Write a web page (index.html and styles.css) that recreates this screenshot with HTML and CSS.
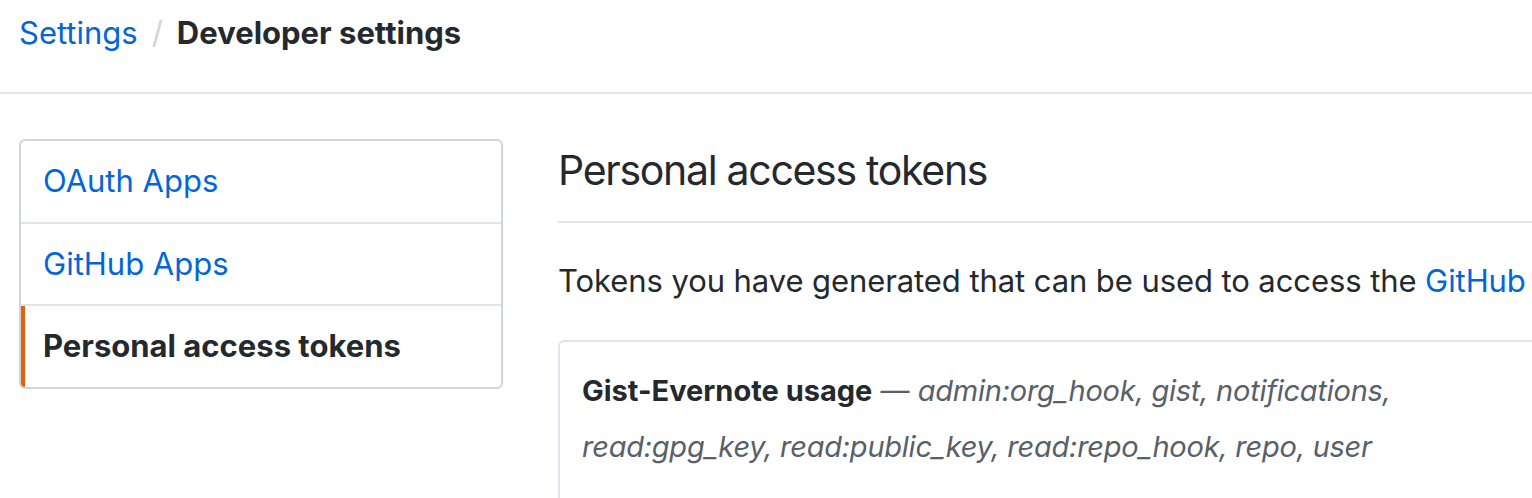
FILE: index.html
```html
<!DOCTYPE html>
<html lang="en">
<head>
<meta charset="utf-8">
<title>Developer settings</title>
<link rel="stylesheet" href="styles.css">
</head>
<body>
<header class="page-head">
  <nav class="breadcrumb">
    <a class="crumb-link" href="#">Settings</a>
    <span class="crumb-sep">/</span>
    <span class="crumb-current">Developer settings</span>
  </nav>
</header>
<div class="layout">
  <aside class="side-menu">
    <a class="menu-item" href="#">OAuth Apps</a>
    <a class="menu-item" href="#">GitHub Apps</a>
    <a class="menu-item selected" href="#">Personal access tokens</a>
  </aside>
  <main class="content">
    <h2 class="subhead">Personal access tokens</h2>
    <p class="intro">Tokens you have generated that can be used to access the <a class="link" href="#">GitHub API</a>.</p>
    <div class="token-box">
      <div class="token-info">
        <strong class="token-name">Gist-Evernote usage</strong>
        <span class="token-dash">—</span>
        <em class="token-scopes">admin:org_hook, gist, notifications, read:gpg_key, read:public_key, read:repo_hook, repo, user</em>
      </div>
    </div>
  </main>
</div>
</body>
</html>
```
FILE: styles.css
```css
html, body {
  margin: 0;
  padding: 0;
  background: #ffffff;
  overflow: hidden;
}
body {
  font-family: Inter, "Liberation Sans", sans-serif;
  color: #24292e;
  width: 1532px;
  height: 498px;
}
a {
  text-decoration: none;
  color: #0366d6;
}
.page-head {
  padding: 9px 19px 0;
  height: 83px;
  border-bottom: 2px solid #e1e4e8;
}
.breadcrumb {
  display: flex;
  align-items: baseline;
  font-size: 31px;
  line-height: 48px;
}
.crumb-sep {
  color: #d1d5da;
  margin: 0 14px;
}
.crumb-current {
  font-weight: 700;
  color: #24292e;
}
.layout {
  display: flex;
  gap: 55px;
  padding: 45px 0 0 19px;
  width: 1700px;
}
.side-menu {
  flex: 0 0 484px;
  box-sizing: border-box;
  border: 2px solid #d1d5da;
  border-radius: 6px;
  height: 250px;
  display: flex;
  flex-direction: column;
  overflow: hidden;
}
.menu-item {
  display: block;
  height: 81px;
  line-height: 80px;
  padding-left: 22px;
  font-size: 31px;
  color: #0366d6;
}
.menu-item + .menu-item {
  border-top: 2px solid #e1e4e8;
}
.menu-item.selected {
  color: #24292e;
  font-weight: 700;
  box-shadow: inset 4px 0 0 #e36209;
}
.content {
  flex: 0 0 1140px;
}
.subhead {
  margin: 0;
  padding: 5px 0 25px;
  font-size: 41px;
  letter-spacing: -1.3px;
  line-height: 52px;
  font-weight: 400;
  border-bottom: 2px solid #e1e4e8;
}
.intro {
  margin: 35px 0 0;
  font-size: 31px;
  letter-spacing: -0.08px;
  line-height: 45px;
  white-space: nowrap;
}
.link {
  color: #0366d6;
}
.token-box {
  margin-top: 37px;
  border: 2px solid #e1e4e8;
  border-radius: 6px;
  padding: 21px 22px 60px;
}
.token-info {
  width: 820px;
  font-size: 29px;
  line-height: 56px;
}
.token-name {
  font-weight: 700;
  color: #24292e;
}
.token-dash,
.token-scopes {
  color: #586069;
}
.token-scopes {
  letter-spacing: -0.25px;
}
```
